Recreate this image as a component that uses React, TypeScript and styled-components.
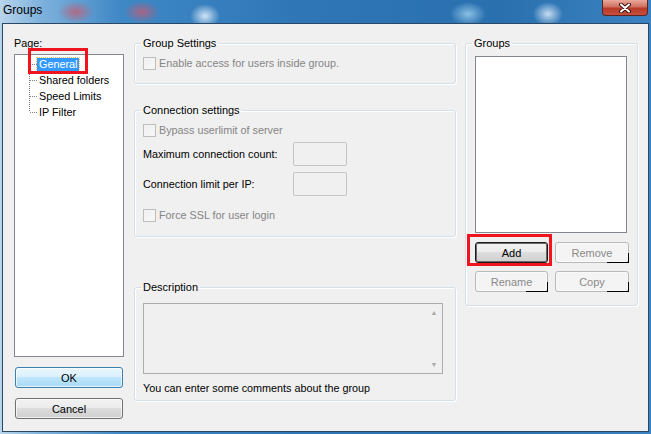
import styled, { createGlobalStyle } from "styled-components";

const GlobalStyle = createGlobalStyle`
  html, body {
    margin: 0;
    padding: 0;
  }
  body {
    width: 651px;
    height: 434px;
    overflow: hidden;
    font-family: "Liberation Sans", Arial, sans-serif;
    font-size: 10.8px;
    color: #000;
  }
`;

const treeItems = ["General", "Shared folders", "Speed Limits", "IP Filter"];

const TreeConnector = ({ first, last }: { first: boolean; last: boolean }) => (
  <svg width="8" height="16" viewBox="0 0 8 16">
    <line
      x1="0.5"
      y1={first ? 8 : 0}
      x2="0.5"
      y2={last ? 8 : 16}
      stroke="#808080"
      strokeDasharray="1 1"
    />
    <line x1="1" y1="8.5" x2="8" y2="8.5" stroke="#808080" strokeDasharray="1 1" />
  </svg>
);

const Checkbox = ({ label }: { label: string }) => (
  <CheckRow>
    <CheckBoxMark />
    <span>{label}</span>
  </CheckRow>
);

const App = () => {
  return (
    <Window>
      <GlobalStyle />
      <TitleBar>
        <TitleText>Groups</TitleText>
        <CloseButton>
          <svg width="14" height="10" viewBox="0 0 14 10">
            <path
              d="M3 1.5 L11 8.5 M11 1.5 L3 8.5"
              stroke="#3a1010"
              strokeWidth="4"
              strokeLinecap="round"
            />
            <path
              d="M3 1.5 L11 8.5 M11 1.5 L3 8.5"
              stroke="#fff"
              strokeWidth="2"
              strokeLinecap="round"
            />
          </svg>
        </CloseButton>
      </TitleBar>

      <Client>
        <LeftColumn>
          <Label>Page:</Label>
          <Tree>
            {treeItems.map((item, i) => (
              <TreeRow key={item}>
                <TreeConnector first={i === 0} last={i === treeItems.length - 1} />
                <TreeLabel $selected={i === 0}>{item}</TreeLabel>
              </TreeRow>
            ))}
          </Tree>
          <DialogButton $variant="primary">OK</DialogButton>
          <DialogButton>Cancel</DialogButton>
        </LeftColumn>

        <MiddleColumn>
          <GroupBox $height={48}>
            <Legend>Group Settings</Legend>
            <Checkbox label="Enable access for users inside group." />
          </GroupBox>

          <GroupBox $height={134} $gap={19}>
            <Legend>Connection settings</Legend>
            <Checkbox label="Bypass userlimit of server" />
            <FieldRow $top={5}>
              <FieldLabel>Maximum connection count:</FieldLabel>
              <TextInput />
            </FieldRow>
            <FieldRow $top={6}>
              <FieldLabel>Connection limit per IP:</FieldLabel>
              <TextInput />
            </FieldRow>
            <CheckSpacer>
              <Checkbox label="Force SSL for user login" />
            </CheckSpacer>
          </GroupBox>

          <GroupBox $height={121} $gap={43} $top={9}>
            <Legend>Description</Legend>
            <TextArea>
              <ScrollBar>
                <Arrow>▲</Arrow>
                <Arrow>▼</Arrow>
              </ScrollBar>
            </TextArea>
            <Hint>You can enter some comments about the group</Hint>
          </GroupBox>
        </MiddleColumn>

        <RightColumn>
          <GroupBox $height={270}>
            <Legend>Groups</Legend>
            <ListBox />
            <ButtonGrid>
              <GroupButton $variant="default">Add</GroupButton>
              <GroupButton $variant="disabled">Remove</GroupButton>
              <GroupButton $variant="disabled">Rename</GroupButton>
              <GroupButton $variant="disabled">Copy</GroupButton>
            </ButtonGrid>
          </GroupBox>
        </RightColumn>
      </Client>

      <Annotation $left={28} $top={48} $w={60} $h={26} />
      <Annotation $left={467} $top={234} $w={85} $h={32} />
    </Window>
  );
};

export default App;

// window frame
const Window = styled.div`
  position: relative;
  width: 651px;
  height: 434px;
  display: flex;
  flex-direction: column;
  background:
    radial-gradient(ellipse 18px 11px at 76px 12px, rgba(200, 90, 110, 0.75), transparent),
    radial-gradient(ellipse 18px 11px at 142px 12px, rgba(200, 90, 110, 0.75), transparent),
    radial-gradient(ellipse 15px 12px at 205px 16px, rgba(235, 245, 255, 0.85), transparent),
    radial-gradient(ellipse 18px 12px at 468px 14px, rgba(180, 225, 250, 0.7), transparent),
    radial-gradient(ellipse 15px 12px at 548px 14px, rgba(235, 245, 255, 0.8), transparent),
    linear-gradient(
      to right,
      #b8d5ec 0px,
      #7fb2dc 40px,
      #3f88c6 120px,
      #2e76b6 300px,
      #2a70af 500px,
      #3a82c1 651px
    );
`;

const TitleBar = styled.div`
  height: 23px;
  display: flex;
  justify-content: space-between;
  align-items: flex-start;
  padding: 0 3px;
  box-sizing: border-box;
`;

const TitleText = styled.div`
  font-size: 12px;
  line-height: 20px;
  color: #000;
`;

const CloseButton = styled.div`
  width: 46px;
  height: 16px;
  box-sizing: border-box;
  border: 1px solid #5a2424;
  border-top: none;
  border-radius: 0 0 4px 4px;
  background: linear-gradient(#e9a99c 0%, #d0705e 45%, #b93a28 55%, #c44f3a 100%);
  display: flex;
  align-items: center;
  justify-content: center;
`;

const Client = styled.div`
  flex: 1;
  margin: 0 2px 2px 2px;
  border: 1px solid #2b4766;
  background: #f0f0f0;
  display: flex;
  padding: 12px 10px 12px 11px;
  min-height: 0;
`;

// left column
const LeftColumn = styled.div`
  width: 110px;
  display: flex;
  flex-direction: column;
  margin-right: 10px;
`;

const Label = styled.div`
  line-height: 14px;
`;

const Tree = styled.div`
  flex: 1;
  margin-top: 4px;
  margin-bottom: 10px;
  background: #fff;
  border: 1px solid #828790;
  padding: 1px 0 0 14px;
`;

const TreeRow = styled.div`
  display: flex;
  align-items: center;
  height: 16px;
`;

const TreeLabel = styled.span<{ $selected?: boolean }>`
  padding: 0 2px;
  line-height: 13px;
  white-space: nowrap;
  background: ${(p) => (p.$selected ? "#3399ff" : "transparent")};
  color: ${(p) => (p.$selected ? "#fff" : "#000")};
  outline: ${(p) => (p.$selected ? "1px dotted #f0c060" : "none")};
`;

const DialogButton = styled.button<{ $variant?: "primary" }>`
  height: 21px;
  margin: 0 1px 10px 1px;
  padding: 0;
  font-family: inherit;
  font-size: 11px;
  color: #000;
  border-radius: 3px;
  border: 1px solid ${(p) => (p.$variant === "primary" ? "#3c7fb1" : "#707070")};
  background: ${(p) =>
    p.$variant === "primary"
      ? "linear-gradient(#eaf6fd 0%, #d9f0fc 50%, #bee6fd 50%, #a7d9f5 100%)"
      : "linear-gradient(#f2f2f2 0%, #ebebeb 50%, #dddddd 50%, #cfcfcf 100%)"};
  box-shadow: inset 0 0 0 1px rgba(255, 255, 255, 0.7);
  &:last-child {
    margin-bottom: 0;
  }
`;

// middle column
const MiddleColumn = styled.div`
  width: 322px;
  display: flex;
  flex-direction: column;
  margin-right: 9px;
`;

const RightColumn = styled.div`
  width: 173px;
  display: flex;
  flex-direction: column;
`;

const GroupBox = styled.fieldset<{ $height: number; $gap?: number; $top?: number }>`
  box-sizing: border-box;
  height: ${(p) => p.$height}px;
  margin: ${(p) => p.$gap || 0}px 0 0 0;
  padding: ${(p) => p.$top || 6}px 8px 0 8px;
  border: 1px solid #d5dfe5;
  border-radius: 3px;
  box-shadow: inset 1px 1px 0 #fff, 1px 1px 0 #fff;
  min-width: 0;
  display: flex;
  flex-direction: column;
`;

const Legend = styled.legend`
  padding: 0 2px;
  margin-left: -2px;
  line-height: 14px;
  font-size: 11px;
`;

const CheckRow = styled.div`
  display: flex;
  align-items: center;
  gap: 3px;
  height: 14px;
  color: #858585;
`;

const CheckBoxMark = styled.span`
  width: 13px;
  height: 13px;
  box-sizing: border-box;
  border: 1px solid #bdbdbd;
  background: linear-gradient(135deg, #eeeeee, #f8f8f8);
  box-shadow: inset 0 0 0 1px #f4f4f4;
`;

const FieldRow = styled.div<{ $top: number }>`
  display: flex;
  align-items: center;
  margin-top: ${(p) => p.$top}px;
`;

const FieldLabel = styled.span`
  width: 150px;
`;

const TextInput = styled.div`
  width: 54px;
  height: 24px;
  box-sizing: border-box;
  border: 1px solid #c5c5c5;
  border-radius: 2px;
  background: #f0f0f0;
`;

const CheckSpacer = styled.div`
  margin-top: 12px;
`;

const TextArea = styled.div`
  width: 300px;
  height: 71px;
  box-sizing: border-box;
  border: 1px solid #adadad;
  background: #f0f0f0;
  display: flex;
  justify-content: flex-end;
`;

const ScrollBar = styled.div`
  width: 16px;
  display: flex;
  flex-direction: column;
  justify-content: space-between;
  align-items: center;
  padding: 5px 0 4px;
`;

const Arrow = styled.span`
  font-size: 7px;
  line-height: 8px;
  color: #a8a8a8;
`;

const Hint = styled.div`
  margin-top: 7px;
  line-height: 14px;
`;

// right column
const ListBox = styled.div`
  width: 152px;
  height: 177px;
  box-sizing: border-box;
  margin-left: 1px;
  border: 1px solid #828790;
  background: #fff;
`;

const ButtonGrid = styled.div`
  display: grid;
  grid-template-columns: 73px 74px;
  column-gap: 7px;
  row-gap: 8px;
  margin: 9px 0 0 1px;
`;

const GroupButton = styled.button<{ $variant: "default" | "disabled" }>`
  position: relative;
  height: 21px;
  padding: 0;
  font-family: inherit;
  font-size: 11px;
  border-radius: 3px;
  color: ${(p) => (p.$variant === "disabled" ? "#8a8a8a" : "#000")};
  border: 1px solid ${(p) => (p.$variant === "disabled" ? "#b8b8b8" : "#1a1a1a")};
  background: ${(p) =>
    p.$variant === "disabled"
      ? "#f4f4f4"
      : "linear-gradient(#f2f2f2 0%, #ebebeb 50%, #dddddd 50%, #cfcfcf 100%)"};
  box-shadow: ${(p) =>
    p.$variant === "disabled" ? "inset 0 0 0 1px #fafafa" : "inset 0 0 0 1px #6a6a6a"};

  /* odd black edge the disabled buttons show in the screenshot */
  &::after {
    content: "";
    display: ${(p) => (p.$variant === "disabled" ? "block" : "none")};
    position: absolute;
    right: -1px;
    bottom: -1px;
    width: 21px;
    height: 9px;
    border-right: 1px solid #000;
    border-bottom: 1px solid #000;
  }
`;

// red markers drawn over the screenshot
const Annotation = styled.div<{ $left: number; $top: number; $w: number; $h: number }>`
  position: absolute;
  left: ${(p) => p.$left}px;
  top: ${(p) => p.$top}px;
  width: ${(p) => p.$w}px;
  height: ${(p) => p.$h}px;
  box-sizing: border-box;
  border: 3px solid #f0141e;
  pointer-events: none;
`;
